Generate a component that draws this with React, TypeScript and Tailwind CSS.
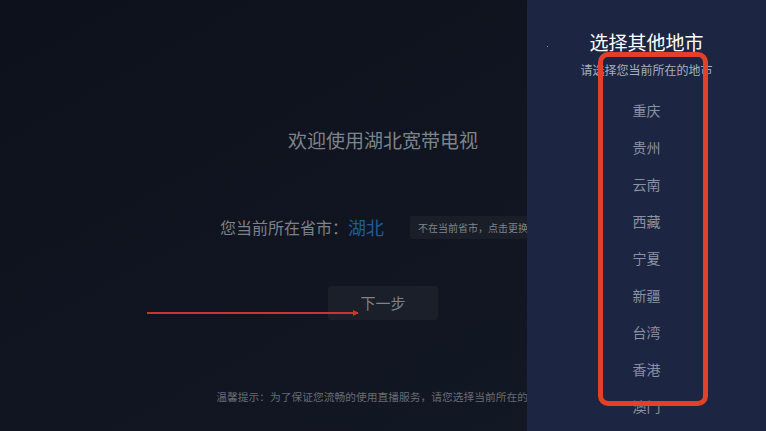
const cities = ['重庆', '贵州', '云南', '西藏', '宁夏', '新疆', '台湾', '香港', '澳门'];

const font = { fontFamily: '"Noto Sans CJK SC", "Noto Sans", sans-serif' };

export default function App() {
  return (
    <div
      className="relative w-[766px] h-[431px] overflow-hidden bg-gradient-to-br from-[#0d111c] to-[#131925]"
      style={font}
    >
      {/* Main welcome screen */}
      <div className="flex flex-col items-center w-full h-full pt-[126px]">
        <h1 className="text-[19px] leading-[28px] text-[#7f838b]">欢迎使用湖北宽带电视</h1>

        <div className="flex items-center mt-[58px] h-[30px]">
          <span className="text-[16px] text-[#7d8189]">您当前所在省市：</span>
          <span className="text-[18px] text-[#1f5d98]">湖北</span>
          <div className="ml-[26px] w-[136px] h-[23px] pl-[8px] flex items-center bg-[#191e29] rounded-[2px] text-[10px] text-[#80848c] whitespace-nowrap">
            不在当前省市，点击更换
          </div>
        </div>

        <button className="mt-[44px] w-[110px] h-[34px] bg-[#1a1f29] rounded-[3px] text-[15px] text-[#7d8189]">
          下一步
        </button>

        <p className="mt-[69px] text-[10.75px] text-[#686c75] whitespace-nowrap">
          温馨提示：为了保证您流畅的使用直播服务，请您选择当前所在的位置
        </p>
      </div>

      {/* Red annotation arrow */}
      <div className="absolute left-[147px] top-[312px] w-[211px] h-[2px] bg-[#c8372d]" />
      <div className="absolute left-[353px] top-[310px] w-0 h-0 border-y-[3px] border-y-transparent border-l-[6px] border-l-[#c8372d]" />

      {/* Right side city panel */}
      <div className="absolute right-0 top-0 w-[239px] h-full bg-[#1c2643] flex flex-col items-center pt-[29px]">
        <h2 className="text-[19px] leading-[26px] text-white">选择其他地市</h2>
        <p className="mt-[7px] text-[12px] leading-[16px] text-[#a9afbc]">请选择您当前所在的地市</p>
        <div className="flex flex-col items-center mt-[14px]">
          {cities.map((c) => (
            <div key={c} className="h-[37px] flex items-center text-[14px] text-[#8a91a0]">
              {c}
            </div>
          ))}
        </div>
        <div className="absolute left-[20px] top-[46px] w-[1px] h-[1px] bg-[#8a91a0]" />
      </div>

      {/* Red annotation box */}
      <div className="absolute left-[598px] top-[52px] w-[110px] h-[354px] border-[5px] border-[#e3402b] rounded-[10px]" />
    </div>
  );
}
